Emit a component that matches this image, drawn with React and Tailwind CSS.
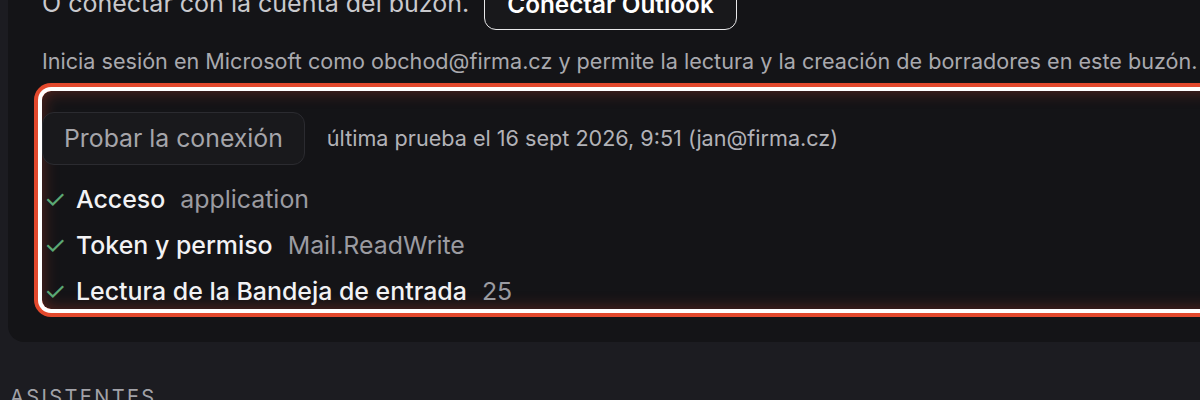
import React from 'react';

const checks = [
  { label: 'Acceso', value: 'application' },
  { label: 'Token y permiso', value: 'Mail.ReadWrite' },
  { label: 'Lectura de la Bandeja de entrada', value: '25' },
];

const CheckRow = ({ label, value }) => (
  <div className="flex items-center leading-[30px]">
    <span className="w-[34px] shrink-0 pl-[2px] text-[25px] text-[#5ba874]">✓</span>
    <span className="text-[24.9px] font-medium text-[#f2f2f4]">{label}</span>
    <span className="ml-[15px] text-[24.9px] text-[#9b9ba1]">{value}</span>
  </div>
);

export default function App() {
  return (
    <div className="h-[400px] w-[1200px] overflow-hidden bg-[#1c1c21] pl-[8px] font-['Inter',sans-serif]">
      <div className="-mt-[40px] w-[1250px] rounded-[16px] bg-[#141417] pl-[34px] pr-[34px] pt-[18px] pb-[33px]">
        <div className="flex h-[52px] items-center gap-[15px]">
          <span className="text-[25px] text-[#c9c9cd]">O conectar con la cuenta del buzón.</span>
          <button className="h-[52px] rounded-[12px] border border-[#e8e8ea] bg-[#18181b] px-[22px] text-[24.3px] font-semibold text-white">
            Conectar Outlook
          </button>
        </div>

        <p className="mt-[17px] whitespace-nowrap text-[21.6px] leading-[28px] text-[#a9a9ae]">
          Inicia sesión en Microsoft como obchod@firma.cz y permite la lectura y la creación de borradores en este buzón.
        </p>

        <div className="mt-[16px] rounded-[9px] pt-[21px] pb-[3px] shadow-[0_0_0_4px_#ffffff,0_0_0_8px_#e3492d,inset_0_0_16px_rgba(227,73,45,0.35)]">
          <div className="flex items-center gap-[22px]">
            <button className="h-[53px] rounded-[12px] border border-[#2b2b30] bg-[#19191c] px-[21px] text-[24.8px] text-[#a5a5aa]">
              Probar la conexión
            </button>
            <span className="text-[21.6px] text-[#b2b2b7]">última prueba el 16 sept 2026, 9:51 (jan@firma.cz)</span>
          </div>
          <div className="mt-[19px] flex flex-col gap-[16px]">
            {checks.map((c) => (
              <CheckRow key={c.label} {...c} />
            ))}
          </div>
        </div>
      </div>

      <div className="mt-[40px] pl-[2px] text-[20px] uppercase tracking-[0.12em] text-[#a2a2a8]">
        Asistentes
      </div>
    </div>
  );
}
